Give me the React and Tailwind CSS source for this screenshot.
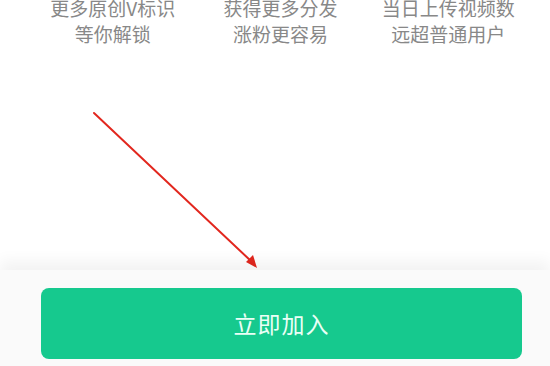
import React from 'react';

const perks = [
    ['更多原创V标识', '等你解锁'],
    ['获得更多分发', '涨粉更容易'],
    ['当日上传视频数', '远超普通用户'],
];

const App = () => {
    return (
        <div
            className="relative w-[550px] h-[366px] overflow-hidden bg-white flex flex-col"
            style={{ fontFamily: '"Noto Sans CJK SC", "Noto Sans", sans-serif' }}
        >
            <div className="grid grid-cols-3 w-[503px] ml-[29px] mt-[-5px] text-[19px] leading-[26px] text-[#888888] text-center">
                {perks.map(([a, b]) => (
                    <div key={a}>
                        <div>{a}</div>
                        <div>{b}</div>
                    </div>
                ))}
            </div>

            <div className="flex-1" />

            {/* arrow annotation */}
            <svg className="absolute left-0 top-0" width="550" height="366" viewBox="0 0 550 366">
                <line x1="94" y1="113" x2="252" y2="262" stroke="#e2271e" strokeWidth="2" strokeLinecap="round" />
                <path d="M257 268 L246 262 L253 255 Z" fill="#e2271e" />
            </svg>

            <div className="relative h-[96px] bg-[#fafafa] shadow-[0_-9px_14px_rgba(0,0,0,0.05)] px-[41px] pt-[18px]">
                <button className="w-[481px] h-[71px] rounded-lg bg-[#16c98e] text-[#eafff6] text-[23px] tracking-[1px] flex items-center justify-center">
                    立即加入
                </button>
            </div>
        </div>
    );
};

export default App;
